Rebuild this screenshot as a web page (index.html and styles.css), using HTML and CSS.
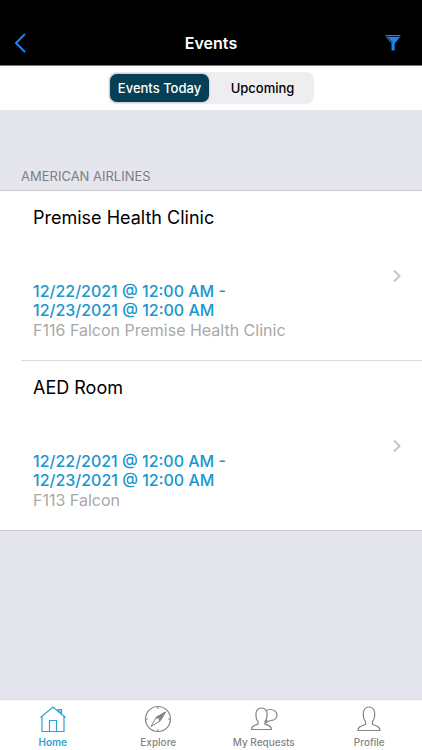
FILE: index.html
```html
<!DOCTYPE html>
<html lang="en">
<head>
<meta charset="utf-8">
<meta name="viewport" content="width=device-width, initial-scale=1">
<title>Events</title>
<link rel="stylesheet" href="styles.css">
</head>
<body>
<header class="navbar">
  <button class="nav-button" type="button" aria-label="Back">
    <svg width="12" height="20" viewBox="0 0 12 20" fill="none" stroke="currentColor" stroke-width="2" stroke-linecap="round" stroke-linejoin="round"><path d="M10.500 1.500L2 10l8.500 8.500"/></svg>
  </button>
  <h1 class="nav-title">Events</h1>
  <button class="nav-button nav-button-end" type="button" aria-label="Filter">
    <svg width="16" height="16" viewBox="0 0 16 16"><path d="M.5 .5h15" stroke="currentColor" stroke-width="1"/><path d="M.8 1.700h14.400L9.700 8.500V15.500H6.500V8.500z" fill="currentColor"/><path d="M2.800 2.500L7.500 8" fill="none" stroke="#000" stroke-width=".7"/></svg>
  </button>
</header>
<div class="filter-bar">
  <div class="segments">
    <button class="segment segment-active" type="button" aria-pressed="true">Events Today</button>
    <button class="segment" type="button" aria-pressed="false">Upcoming</button>
  </div>
</div>
<main class="content">
  <h2 class="group-title">AMERICAN AIRLINES</h2>
  <ul class="events">
    <li class="event">
      <a class="event-link" href="#premise">
        <span class="event-body">
          <span class="event-name">Premise Health Clinic</span>
          <span class="event-time">12/22/2021 @ 12:00 AM -<br>12/23/2021 @ 12:00 AM</span>
          <span class="event-place">F116 Falcon Premise Health Clinic</span>
        </span>
        <svg class="chevron" width="8" height="14" viewBox="0 0 8 14" fill="none" stroke="currentColor" stroke-width="2"><path d="M1 1.500l5.500 5.500L1 12.500"/></svg>
      </a>
    </li>
    <li class="event">
      <a class="event-link" href="#aed">
        <span class="event-body">
          <span class="event-name">AED Room</span>
          <span class="event-time">12/22/2021 @ 12:00 AM -<br>12/23/2021 @ 12:00 AM</span>
          <span class="event-place">F113 Falcon</span>
        </span>
        <svg class="chevron" width="8" height="14" viewBox="0 0 8 14" fill="none" stroke="currentColor" stroke-width="2"><path d="M1 1.500l5.500 5.500L1 12.500"/></svg>
      </a>
    </li>
  </ul>
</main>
<nav class="tabs">
  <a class="tab tab-active" href="#home">
    <svg width="28" height="28" viewBox="0 0 28 28" fill="none" stroke="currentColor" stroke-width="1.200"><path d="M1.500 12.500L14 2l12.500 10.500M3 11.500v15h22v-15M10.500 26.500v-11h7v11"/><path d="M19 6V4.500h3.500v4.500z" fill="currentColor" fill-opacity=".4"/></svg>
    <span>Home</span>
  </a>
  <a class="tab" href="#explore">
    <svg width="28" height="28" viewBox="0 0 28 28" fill="none" stroke="currentColor"><circle cx="14" cy="14" r="12.500" stroke-width="1.200"/><path d="M14 1.500v2.500M14 24v2.500M1.500 14H4M24 14h2.500"/><path d="M21.500 7L12 12.500 7 21.500l9-5.500z"/><path d="M21.500 7L12 12.500l4 3.500z" fill="currentColor"/><circle cx="14" cy="14.200" r="1" fill="#fff" stroke="none"/></svg>
    <span>Explore</span>
  </a>
  <a class="tab" href="#requests">
    <svg width="28" height="28" viewBox="0 0 28 28" fill="none" stroke="currentColor" stroke-width="1.200"><path d="M1.500 24.500c0-3 2-4 6.500-5.300v-2.700c-1.500-1.500-2-3.500-2-5.500-.5-5 1.500-8 5.500-8s6 3 5.500 8c0 2-.5 4-2 5.500v2.700c4.500 1.300 6.500 2.300 6.500 5.300z"/><path d="M16 6.200C17 5 18.500 4.500 20 4.500c4 0 7 2.300 7 5.500 0 3.500-3 5.500-6.500 5.500L16 17.500l1-2.700"/></svg>
    <span>My Requests</span>
  </a>
  <a class="tab" href="#profile">
    <svg width="28" height="28" viewBox="0 0 28 28" fill="none" stroke="currentColor" stroke-width="1.200"><path d="M3 25.500c0-3.500 2.500-4.500 7.500-6v-3c-1.500-1.500-2-3.500-2.200-5.500C7.800 5 10 2 14 2s6.200 3 5.700 9c-.2 2-.7 4-2.200 5.500v3c5 1.500 7.500 2.500 7.500 6z"/></svg>
    <span>Profile</span>
  </a>
</nav>
</body>
</html>
```
FILE: styles.css
```css
* {
  box-sizing: border-box;
}

body {
  margin: 0;
  min-height: 100vh;
  display: flex;
  flex-direction: column;
  background: #e5e5ee;
  color: #000;
  font-family: Inter, "Liberation Sans", sans-serif;
}

button {
  font: inherit;
  color: inherit;
  border: 0;
  padding: 0;
  background: none;
}

a {
  color: inherit;
  text-decoration: none;
}

.navbar {
  display: grid;
  grid-template-columns: 1fr auto 1fr;
  align-items: center;
  height: 66px;
  padding: 20px 21px 0 14px;
  background: #000;
  border-bottom: 1px solid #777;
}

.nav-button {
  display: flex;
  color: #1a84f0;
}

.nav-button-end {
  justify-self: end;
}

.nav-title {
  margin: 0;
  padding-left: 7px;
  color: #fff;
  font-size: 16px;
  line-height: 20px;
  font-weight: 600;
}

.filter-bar {
  display: flex;
  justify-content: center;
  padding: 6px 0;
  background: #fff;
}

.segments {
  display: grid;
  grid-template-columns: repeat(2, minmax(0, 1fr));
  gap: 4px;
  width: 206px;
  height: 32px;
  padding: 2px;
  border-radius: 8px;
  background: #eeeef0;
}

.segment {
  border-radius: 7px;
  font-size: 13px;
  font-weight: 500;
  white-space: nowrap;
}

.segment-active {
  background: #073f55;
  color: #fff;
  box-shadow: 0 0 2px #073f5580;
}

.content {
  flex: 1;
}

.group-title {
  margin: 0;
  padding: 58px 21px 6px;
  color: #7d7d83;
  font-size: 13px;
  line-height: 16px;
  font-weight: 400;
}

.events {
  margin: 0;
  padding: 0;
  list-style: none;
  background: #fff;
  border-top: 1px solid #cbcbd0;
  border-bottom: 1px solid #cbcbd0;
}

.event {
  padding-left: 21px;
}

.event-link {
  display: flex;
  align-items: center;
  justify-content: space-between;
  padding: 0 21px 0 12px;
}

.event + .event .event-link {
  border-top: 1px solid #dcdcde;
}

.event-body {
  display: flex;
  flex-direction: column;
  padding: 14px 0 20px;
}

.event-name {
  margin-bottom: 51px;
  font-size: 18px;
  line-height: 26px;
}

.event-time,
.event-place {
  font-size: 16px;
  line-height: 19px;
}

.event-time {
  color: #1996d0;
  font-weight: 500;
}

.event-place {
  padding-top: 1px;
  color: #a9a9a9;
}

.chevron {
  color: #c4c4c6;
}

.tabs {
  display: grid;
  grid-template-columns: repeat(4, 1fr);
  padding: 5px 0 0;
  background: #fff;
  border-top: 1px solid #dcdce0;
}

.tab {
  display: flex;
  flex-direction: column;
  align-items: center;
  gap: 2px;
  color: #858585;
  font-size: 10px;
  line-height: 15px;
  font-weight: 500;
}

.tab-active {
  color: #2ba3d4;
  font-weight: 600;
}
```
